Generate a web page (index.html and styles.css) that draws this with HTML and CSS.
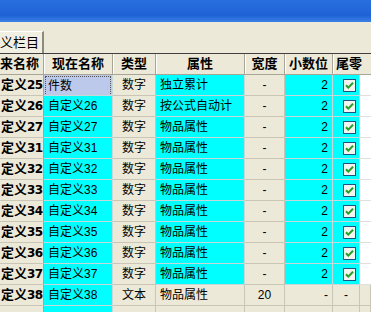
FILE: index.html
```html
<!DOCTYPE html>
<html lang="zh">
<head>
<meta charset="utf-8">
<link rel="stylesheet" href="styles.css">
</head>
<body>
<div class="titlebar"></div>
<div class="tabstrip">
  <div class="tab">义栏目</div>
</div>
<div class="grid">
  <div class="hc c1">来名称</div><div class="hc">现在名称</div><div class="hc">类型</div><div class="hc">属性</div><div class="hc">宽度</div><div class="hc">小数位</div><div class="hc hc7">尾零</div>

  <div class="fx">定义<b>25</b></div><div class="cy sel"><span class="focus">件数</span></div><div class="bg ctr">数字</div><div class="cy">独立累计</div><div class="bg ctr">-</div><div class="cy rt">2</div><div class="cy chk"><svg width="13" height="13" viewBox="0 0 13 13"><rect x="0.5" y="0.5" width="12" height="12" fill="#f4f4f0" stroke="#1c5180"/><path d="M3 6.2 L5.3 8.6 L10 3.8" fill="none" stroke="#21a121" stroke-width="2"/></svg></div><div class="wh"></div>

  <div class="fx">定义<b>26</b></div><div class="cy">自定义26</div><div class="bg ctr">数字</div><div class="cy">按公式自动计</div><div class="bg ctr">-</div><div class="cy rt">2</div><div class="cy chk"><svg width="13" height="13" viewBox="0 0 13 13"><rect x="0.5" y="0.5" width="12" height="12" fill="#f4f4f0" stroke="#1c5180"/><path d="M3 6.2 L5.3 8.6 L10 3.8" fill="none" stroke="#21a121" stroke-width="2"/></svg></div><div class="wh"></div>

  <div class="fx">定义<b>27</b></div><div class="cy">自定义27</div><div class="bg ctr">数字</div><div class="cy">物品属性</div><div class="bg ctr">-</div><div class="cy rt">2</div><div class="cy chk"><svg width="13" height="13" viewBox="0 0 13 13"><rect x="0.5" y="0.5" width="12" height="12" fill="#f4f4f0" stroke="#1c5180"/><path d="M3 6.2 L5.3 8.6 L10 3.8" fill="none" stroke="#21a121" stroke-width="2"/></svg></div><div class="wh"></div>

  <div class="fx">定义<b>31</b></div><div class="cy">自定义31</div><div class="bg ctr">数字</div><div class="cy">物品属性</div><div class="bg ctr">-</div><div class="cy rt">2</div><div class="cy chk"><svg width="13" height="13" viewBox="0 0 13 13"><rect x="0.5" y="0.5" width="12" height="12" fill="#f4f4f0" stroke="#1c5180"/><path d="M3 6.2 L5.3 8.6 L10 3.8" fill="none" stroke="#21a121" stroke-width="2"/></svg></div><div class="wh"></div>

  <div class="fx">定义<b>32</b></div><div class="cy">自定义32</div><div class="bg ctr">数字</div><div class="cy">物品属性</div><div class="bg ctr">-</div><div class="cy rt">2</div><div class="cy chk"><svg width="13" height="13" viewBox="0 0 13 13"><rect x="0.5" y="0.5" width="12" height="12" fill="#f4f4f0" stroke="#1c5180"/><path d="M3 6.2 L5.3 8.6 L10 3.8" fill="none" stroke="#21a121" stroke-width="2"/></svg></div><div class="wh"></div>

  <div class="fx">定义<b>33</b></div><div class="cy">自定义33</div><div class="bg ctr">数字</div><div class="cy">物品属性</div><div class="bg ctr">-</div><div class="cy rt">2</div><div class="cy chk"><svg width="13" height="13" viewBox="0 0 13 13"><rect x="0.5" y="0.5" width="12" height="12" fill="#f4f4f0" stroke="#1c5180"/><path d="M3 6.2 L5.3 8.6 L10 3.8" fill="none" stroke="#21a121" stroke-width="2"/></svg></div><div class="wh"></div>

  <div class="fx">定义<b>34</b></div><div class="cy">自定义34</div><div class="bg ctr">数字</div><div class="cy">物品属性</div><div class="bg ctr">-</div><div class="cy rt">2</div><div class="cy chk"><svg width="13" height="13" viewBox="0 0 13 13"><rect x="0.5" y="0.5" width="12" height="12" fill="#f4f4f0" stroke="#1c5180"/><path d="M3 6.2 L5.3 8.6 L10 3.8" fill="none" stroke="#21a121" stroke-width="2"/></svg></div><div class="wh"></div>

  <div class="fx">定义<b>35</b></div><div class="cy">自定义35</div><div class="bg ctr">数字</div><div class="cy">物品属性</div><div class="bg ctr">-</div><div class="cy rt">2</div><div class="cy chk"><svg width="13" height="13" viewBox="0 0 13 13"><rect x="0.5" y="0.5" width="12" height="12" fill="#f4f4f0" stroke="#1c5180"/><path d="M3 6.2 L5.3 8.6 L10 3.8" fill="none" stroke="#21a121" stroke-width="2"/></svg></div><div class="wh"></div>

  <div class="fx">定义<b>36</b></div><div class="cy">自定义36</div><div class="bg ctr">数字</div><div class="cy">物品属性</div><div class="bg ctr">-</div><div class="cy rt">2</div><div class="cy chk"><svg width="13" height="13" viewBox="0 0 13 13"><rect x="0.5" y="0.5" width="12" height="12" fill="#f4f4f0" stroke="#1c5180"/><path d="M3 6.2 L5.3 8.6 L10 3.8" fill="none" stroke="#21a121" stroke-width="2"/></svg></div><div class="wh"></div>

  <div class="fx">定义<b>37</b></div><div class="cy">自定义37</div><div class="bg ctr">数字</div><div class="cy">物品属性</div><div class="bg ctr">-</div><div class="cy rt">2</div><div class="cy chk"><svg width="13" height="13" viewBox="0 0 13 13"><rect x="0.5" y="0.5" width="12" height="12" fill="#f4f4f0" stroke="#1c5180"/><path d="M3 6.2 L5.3 8.6 L10 3.8" fill="none" stroke="#21a121" stroke-width="2"/></svg></div><div class="wh"></div>

  <div class="fx">定义<b>38</b></div><div class="cy">自定义38</div><div class="bg ctr">文本</div><div class="bg">物品属性</div><div class="bg ctr">20</div><div class="bg rt">-</div><div class="bg ctr">-</div><div class="bg"></div>

  <div class="fx"></div><div class="cy"></div><div class="bg"></div><div class="bg"></div><div class="bg"></div><div class="bg"></div><div class="bg"></div><div class="bg"></div>
</div>
</body>
</html>
```

FILE: styles.css
```css
html, body {
  margin: 0;
  padding: 0;
  background: #ece9d8;
  overflow: hidden;
  width: 371px;
  height: 312px;
}

body {
  font-family: "Liberation Sans", "Noto Sans CJK SC", sans-serif;
  font-size: 12px;
  color: #000;
}

.titlebar {
  height: 22px;
  background: linear-gradient(to bottom, #2a6fe0 0%, #1f62d6 70%, #3b7fe6 100%);
}

.tabstrip {
  height: 31px;
  box-sizing: border-box;
  padding-top: 9px;
  display: flex;
  background: #ece9d8;
}

.tab {
  width: 44px;
  height: 22px;
  box-sizing: border-box;
  padding: 0;
  border-top: 1px solid #fff;
  border-right: 2px solid #8c8a80;
  background: #f1efe2;
  font-size: 13px;
  line-height: 20px;
  font-family: "Noto Sans CJK SC", sans-serif;
}

.grid {
  display: grid;
  grid-template-columns: 44px 69px 43px 89px 40px 48px 27px 11px;
  grid-auto-rows: 21px;
  border-top: 1px solid #404040;
}

.grid > div {
  box-sizing: border-box;
  border-right: 1px solid #c9c6b8;
  border-bottom: 1px solid #c9c6b8;
  line-height: 20px;
  white-space: nowrap;
  overflow: hidden;
  padding: 0 4px;
}

.grid > .hc {
  background: #ece9d8;
  font-weight: bold;
  font-size: 13px;
  text-align: center;
  padding: 0;
  border-right: 1px solid #a8a596;
  border-bottom: 1px solid #a8a596;
  box-shadow: inset 1px 0 0 #fff;
}

.grid > .c1 {
  text-align: left;
  box-shadow: none;
}

.grid > .hc7 {
  grid-column: span 2;
  text-align: left;
  padding-left: 3px;
  border-right: none;
}

.grid > .fx {
  background: #ece9d8;
  font-weight: bold;
  font-size: 13px;
  padding-left: 1px;
  border-right: 1px solid #a8a596;
}

.fx b {
  font-family: "DejaVu Sans", sans-serif;
  font-size: 12px;
  letter-spacing: -0.5px;
}

.grid > .cy {
  background: #00ffff;
  border-right-color: #c8d8d8;
  border-bottom-color: #c8d8d8;
}

.grid > .bg {
  background: #ece9d8;
}

.grid > .wh {
  background: #ffffff;
  border-right: none;
  border-bottom-color: #e0e0e0;
}

.grid > .sel {
  background: #bcc9ea;
  padding: 1px;
}

.focus {
  display: block;
  height: 18px;
  line-height: 18px;
  border: 1px dotted #555;
  padding-left: 2px;
}

.ctr {
  text-align: center;
}

.grid > .rt {
  text-align: right;
  padding-right: 4px;
}

.grid > .chk {
  padding: 0 0 0 10px;
  display: flex;
  align-items: center;
}

.chk svg {
  display: block;
}
```
